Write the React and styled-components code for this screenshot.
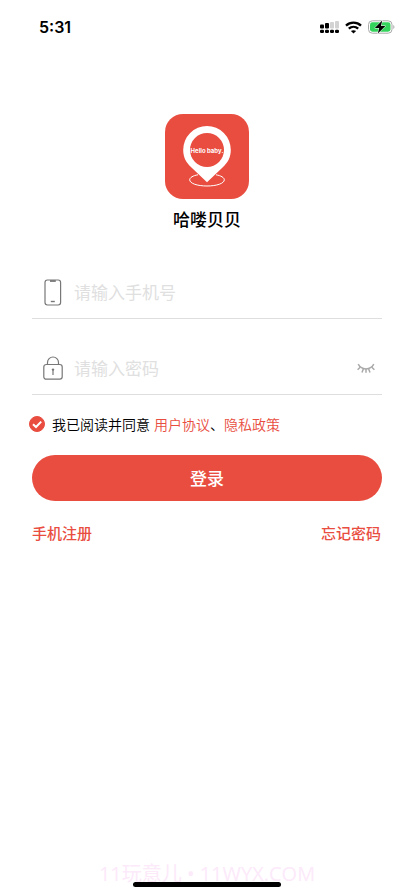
import React, { useState } from 'react'
import styled, { createGlobalStyle } from 'styled-components';

const theme_red = '#e94d40';
const line_gray = '#dedede';

const GlobalStyle = createGlobalStyle`
* {
    box-sizing: border-box;
}
body {
    margin: 0;
    background: #fff;
    font-family: 'Noto Sans CJK SC', sans-serif;
}
`

const StyledPage = styled.div`
display: flex;
flex-direction: column;
min-height: 100vh;
color: #000;
`

const StyledStatusBar = styled.header`
display: flex;
align-items: center;
justify-content: space-between;
height: 54px;
padding: 0 19px 0 39px;
.time {
    font-family: Inter, sans-serif;
    font-size: 16px;
    font-weight: 600;
}
.icons {
    display: flex;
    align-items: center;
    gap: 6px;
}
`

const StyledBrand = styled.div`
display: flex;
flex-direction: column;
align-items: center;
margin-top: 60px;
h1 {
    margin: 8px 0 0;
    font-size: 17px;
    font-weight: 500;
    line-height: 24px;
}
`

const StyledForm = styled.form`
display: flex;
flex-direction: column;
margin: 35px 32px 0;
`

const StyledField = styled.div`
display: flex;
align-items: center;
height: 53px;
padding: 0 7px 0 10px;
border-bottom: 1px solid ${line_gray};
& + & {
    margin-top: 23px;
}
label {
    display: flex;
    width: 22px;
    justify-content: center;
}
input {
    flex: 1;
    min-width: 0;
    height: 30px;
    margin-left: 10px;
    padding: 0 0 2px;
    border: 0;
    outline: none;
    background: none;
    color: #222;
    font-family: inherit;
    font-size: 17px;
}
input::placeholder {
    color: #e0e0e0;
    opacity: 1;
}
`

const StyledIconButton = styled.button`
display: flex;
padding: 0;
border: 0;
background: none;
cursor: pointer;
`

const StyledAgreement = styled.div`
display: flex;
align-items: center;
margin: 17px 0 0 -3px;
font-size: 14px;
font-weight: 350;
line-height: 24px;
.check {
    display: grid;
    margin-right: 7px;
}
.check > * {
    grid-area: 1 / 1;
}
.check svg {
    pointer-events: none;
}
label {
    margin-right: 4px;
}
a {
    color: ${theme_red};
    text-decoration: none;
}
`

const StyledCheckbox = styled.input`
appearance: none;
width: 16px;
height: 16px;
margin: 0;
border: 1px solid ${theme_red};
border-radius: 50%;
background: #fff;
&:checked {
    background: ${theme_red};
}
`

const StyledSubmit = styled.button`
height: 46px;
margin-top: 19px;
padding: 0 0 2px;
border: 0;
border-radius: 23px;
background: ${theme_red};
color: #fff;
font-family: inherit;
font-size: 17px;
font-weight: 500;
cursor: pointer;
`

const StyledLinks = styled.nav`
display: flex;
justify-content: space-between;
margin-top: 20px;
padding-right: 1px;
a {
    color: ${theme_red};
    font-size: 15px;
    font-weight: 500;
    line-height: 24px;
    text-decoration: none;
}
`

const StyledFooter = styled.footer`
position: relative;
margin-top: auto;
padding-bottom: 7px;
p {
    margin: 0;
    color: #fce9fa;
    font-family: 'Open Sans', 'Noto Sans CJK SC', sans-serif;
    font-size: 20px;
    line-height: 30px;
    text-align: center;
}
`

// iOS home indicator, lies over the footer text
const StyledHomeBar = styled.div`
position: absolute;
bottom: 9px;
left: 50%;
width: 148px;
height: 5px;
border-radius: 3px;
background: #000;
transform: translateX(-50%);
`

const SignalIcon = () => (
    <svg width="19" height="12" viewBox="0 0 19 12">
        <rect x="0" y="3.5" width="4" height="4" rx="1" />
        <rect x="5" y="2" width="4" height="5.5" rx="1" />
        <rect x="10" y="1" width="4" height="6.5" rx="1" fill="#d2d2d2" />
        <rect x="15" y="0" width="4" height="7.5" rx="1" fill="#d2d2d2" />
        <rect x="0" y="8.7" width="4" height="3.3" rx="1.2" />
        <rect x="5" y="8.7" width="4" height="3.3" rx="1.2" />
        <rect x="10" y="8.7" width="4" height="3.3" rx="1.2" />
        <rect x="15" y="8.7" width="4" height="3.3" rx="1.2" />
    </svg>
)

const WifiIcon = () => (
    <svg width="17" height="13" viewBox="0 0 17 13" fill="none" stroke="#000" strokeWidth="2.3">
        <path d="M1 4.6C5.2.6 11.8.6 16 4.6" />
        <path d="M3.8 7.7C6.5 5.2 10.5 5.2 13.2 7.7" />
        <path d="M8.5 12.6 5.9 10.1C7.4 8.8 9.6 8.8 11.1 10.1Z" fill="#000" stroke="none" />
    </svg>
)

const BatteryIcon = () => (
    <svg width="27" height="14" viewBox="0 0 27 14">
        <rect x=".5" y=".8" width="23.5" height="12.4" rx="3.8" fill="#fff" stroke="#a8a8a8" />
        <rect x="2" y="2.3" width="20.5" height="9.4" rx="2.4" fill="#34d35c" />
        <path d="M25.3 5C26.8 5.6 26.8 8.4 25.3 9Z" fill="#a8a8a8" />
        <path d="M14.2.4 6.8 8H11.2L9.8 13.6 17.4 6H13Z" stroke="#fff" strokeWidth="1" paintOrder="stroke" />
    </svg>
)

const Logo = () => (
    <svg width="84" height="85" viewBox="0 0 84 85" role="img" aria-label="Hello baby.">
        <rect width="84" height="85" rx="18" fill={theme_red} />
        <path d="M33 60.8C28 61.6 24.7 63.6 24.7 65.8C24.7 69.4 32.3 72 42 72S59.3 69.4 59.3 65.8C59.3 63.6 56 61.6 51 60.8" fill="none" stroke="#fff" strokeWidth="1" />
        <path d="M42 12A23.8 23.8 0 0 1 65.8 35.8C65.8 43.5 62.8 48.7 57.8 53.2L42 68.3 26.2 53.2C21.2 48.7 18.2 43.5 18.2 35.8A23.8 23.8 0 0 1 42 12Z" fill="#fff" />
        <circle cx="42" cy="36" r="17" fill={theme_red} />
        <text x="42" y="39" textAnchor="middle" fill="#fff" fontFamily="Inter, sans-serif" fontSize="6" fontWeight="700">Hello baby.</text>
    </svg>
)

const PhoneIcon = () => (
    <svg width="18" height="27" viewBox="0 0 18 27" fill="none" stroke="#777" strokeWidth="1.2">
        <rect x="1" y="1" width="15.6" height="25" rx="2.4" />
        <path d="M6 2H11.8" strokeWidth="1.8" />
        <path d="M6.8 22.5H10.8" strokeWidth="1.4" />
    </svg>
)

const LockIcon = () => (
    <svg width="20" height="24" viewBox="0 0 20 24" fill="none" stroke="#777" strokeWidth="1.2">
        <rect x=".8" y="8.5" width="18.4" height="14.7" rx="2.4" />
        <path d="M4.5 8.5V6.5A5.5 5.5 0 0 1 15.5 6.5V8.5" />
        <path d="M10 13V19" strokeWidth="1.2" />
        <circle cx="10" cy="13.6" r="1.2" fill="#777" stroke="none" />
    </svg>
)

const ClosedEyeIcon = () => (
    <svg width="18" height="11" viewBox="0 0 18 11" fill="none" stroke="#a9a9a9" strokeWidth="1.5">
        <path d="M1.2 1.2C4.6 7.5 13.4 7.5 16.8 1.2" />
        <path d="M3.2 4.2.6 6.7M6.4 5.8 5 9.4M9 6V9.8M11.6 5.8 13 9.4M14.8 4.2 17.4 6.7" />
    </svg>
)

const Field = ({id, icon, children, ...rest}) => {
    return (
        <StyledField>
            <label htmlFor={id} aria-label={rest.placeholder}>{icon}</label>
            <input id={id} {...rest} />
            {children}
        </StyledField>
    )
}

const App = () => {
    const [visible, setVisible] = useState(false);
    const [agreed, setAgreed] = useState(true);

    return (
        <StyledPage>
            <GlobalStyle />
            <StyledStatusBar>
                <span className='time'>5:31</span>
                <div className='icons'>
                    <SignalIcon />
                    <WifiIcon />
                    <BatteryIcon />
                </div>
            </StyledStatusBar>
            <StyledBrand>
                <Logo />
                <h1>哈喽贝贝</h1>
            </StyledBrand>
            <StyledForm onSubmit={(e) => e.preventDefault()}>
                <Field id='phone' type='tel' placeholder='请输入手机号' icon={<PhoneIcon />} />
                <Field id='password' type={visible ? 'text' : 'password'} placeholder='请输入密码' icon={<LockIcon />}>
                    <StyledIconButton type='button' aria-label='显示密码' onClick={() => setVisible(!visible)}>
                        <ClosedEyeIcon />
                    </StyledIconButton>
                </Field>
                <StyledAgreement>
                    <span className='check'>
                        <StyledCheckbox id='agree' type='checkbox' checked={agreed} onChange={() => setAgreed(!agreed)} />
                        <svg width="16" height="16" viewBox="0 0 16 16" fill="none" stroke="#fff" strokeWidth="2">
                            <path d="M4 8.2 7 11 12.2 5.6" />
                        </svg>
                    </span>
                    <label htmlFor='agree'>我已阅读并同意</label>
                    <a href='#terms'>用户协议</a>、<a href='#privacy'>隐私政策</a>
                </StyledAgreement>
                <StyledSubmit type='submit'>登录</StyledSubmit>
                <StyledLinks>
                    <a href='#register'>手机注册</a>
                    <a href='#forgot'>忘记密码</a>
                </StyledLinks>
            </StyledForm>
            <StyledFooter>
                <p>11玩意儿 • 11WYX.COM</p>
                <StyledHomeBar />
            </StyledFooter>
        </StyledPage>
    )
}

export default App;
